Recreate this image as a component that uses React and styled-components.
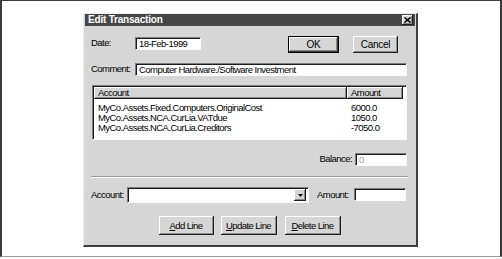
import React from "react";
import styled, { createGlobalStyle } from "styled-components";

const Global = createGlobalStyle`
  html, body { margin: 0; padding: 0; background: #fff; }
  body { font-family: "Liberation Sans", Arial, sans-serif; }
  * { box-sizing: border-box; }
`;

const Frame = styled.div`
  width: 502px;
  height: 257px;
  border-top: 1px solid #3a3a3a;
  border-left: 2px solid #3a3a3a;
  border-right: 2px solid #3a3a3a;
  border-bottom: 1px solid #9a9a9a;
  display: flex;
  justify-content: flex-start;
  align-items: flex-start;
  padding: 12px 0 0 81px;
  background: #fff;
`;

const Dialog = styled.div`
  width: 335px;
  height: 234px;
  background: #d6d6d6;
  border-top: 1px solid #ececec;
  border-left: 1px solid #ececec;
  border-right: 2px solid #3c3c3c;
  border-bottom: 2px solid #3c3c3c;
  display: flex;
  flex-direction: column;
  font-size: 9.5px;
  letter-spacing: -0.55px;
  color: #000;
`;

const TitleBar = styled.div`
  height: 12px;
  margin: 0 1px 0 1px;
  background: #464646;
  color: #fff;
  display: flex;
  align-items: center;
  justify-content: space-between;
  padding: 0 2px 0 3px;
`;

const TitleText = styled.span`
  font-weight: bold;
  font-size: 10px;
  letter-spacing: -0.2px;
  line-height: 12px;
`;

const CloseBtn = styled.div`
  width: 11px;
  height: 10px;
  background: #d6d6d6;
  box-shadow: inset -1px -1px #1e1e1e, inset 1px 1px #fff, inset -2px -2px #888;
  display: flex;
  align-items: center;
  justify-content: center;
`;

const Body = styled.div`
  padding: 10px 8px 0 7px;
  display: flex;
  flex-direction: column;
`;

const Row = styled.div`
  display: flex;
  align-items: flex-start;
  margin-top: ${(p) => p.$mt || 0}px;
  justify-content: ${(p) => p.$justify || "flex-start"};
`;

const Label = styled.span`
  display: inline-block;
  width: ${(p) => (p.$w ? `${p.$w}px` : "auto")};
  margin-top: ${(p) => p.$mt || 0}px;
  margin-left: ${(p) => p.$ml || 0}px;
  margin-right: ${(p) => p.$mr || 0}px;
  line-height: 12px;
  white-space: nowrap;
`;

const Field = styled.div`
  width: ${(p) => (p.$w ? `${p.$w}px` : "auto")};
  flex: ${(p) => (p.$grow ? 1 : "none")};
  height: ${(p) => p.$h || 13}px;
  margin-top: ${(p) => p.$mt || 0}px;
  margin-right: ${(p) => p.$mr || 0}px;
  background: #fff;
  border-top: 1px solid #7c7c7c;
  border-left: 1px solid #7c7c7c;
  border-right: 1px solid #fafafa;
  border-bottom: 1px solid #fafafa;
  box-shadow: inset 1px 1px #1c1c1c;
  padding: 0 0 0 3px;
  line-height: ${(p) => (p.$h || 13) - 2}px;
  color: ${(p) => (p.$disabled ? "#a0a0a0" : "#000")};
  white-space: nowrap;
  overflow: hidden;
`;

const Button = styled.div`
  width: ${(p) => p.$w}px;
  height: ${(p) => p.$h || 19}px;
  margin-left: ${(p) => p.$ml || 0}px;
  margin-right: ${(p) => p.$mr || 0}px;
  background: #d6d6d6;
  display: flex;
  align-items: center;
  justify-content: center;
  font-size: ${(p) => (p.$big ? 10 : 9.5)}px;
  letter-spacing: ${(p) => (p.$big ? -0.3 : -0.55)}px;
  box-shadow: ${(p) =>
    p.$default
      ? "inset 0 0 0 1px #000, inset -2px -2px #3a3a3a, inset 2px 2px #fff, inset -3px -3px #8a8a8a"
      : "inset -1px -1px #1e1e1e, inset 1px 1px #fff, inset -2px -2px #8a8a8a"};
  padding-bottom: 1px;
`;

const U = styled.span`
  text-decoration: underline;
`;

const List = styled.div`
  height: 55px;
  margin: 9px 1px 0 1px;
  background: #fff;
  border-top: 1px solid #7c7c7c;
  border-left: 1px solid #7c7c7c;
  border-right: 1px solid #fafafa;
  border-bottom: 1px solid #fafafa;
  box-shadow: inset 1px 1px #1c1c1c;
  padding: 1px 0 0 1px;
  display: flex;
  flex-direction: column;
`;

const Grid = styled.div`
  display: grid;
  grid-template-columns: 253px 56px;
`;

const HeaderCell = styled.div`
  height: 12px;
  line-height: 11px;
  padding-left: 4px;
  background: #d6d6d6;
  box-shadow: inset -1px -1px #1e1e1e, inset 1px 1px #fff, inset -2px -2px #8a8a8a;
`;

const Rows = styled(Grid)`
  padding-top: 4px;
`;

const Cell = styled.div`
  height: 10px;
  line-height: 10px;
  padding-left: 4px;
  white-space: nowrap;
`;

const Separator = styled.div`
  height: 2px;
  margin-top: 10px;
  border-top: 1px solid #9a9a9a;
  border-bottom: 1px solid #fff;
`;

const Combo = styled(Field)`
  display: flex;
  justify-content: flex-end;
  align-items: flex-start;
  padding: 1px 2px 0 0;
`;

const DropBtn = styled.div`
  width: 12px;
  height: 12px;
  background: #d6d6d6;
  box-shadow: inset -1px -1px #1e1e1e, inset 1px 1px #fff, inset -2px -2px #8a8a8a;
  display: flex;
  align-items: center;
  justify-content: center;
`;

const rows = [
  ["MyCo.Assets.Fixed.Computers.OriginalCost", "6000.0"],
  ["MyCo.Assets.NCA.CurLia.VATdue", "1050.0"],
  ["MyCo.Assets.NCA.CurLia.Creditors", "-7050.0"],
];

export default function App() {
  return (
    <>
      <Global />
      <Frame>
        <Dialog>
          <TitleBar>
            <TitleText>Edit Transaction</TitleText>
            <CloseBtn>
              <svg width="7" height="6" viewBox="0 0 7 6">
                <path d="M0.5 0.5 L6.5 5.5 M6.5 0.5 L0.5 5.5" stroke="#000" strokeWidth="1.6" />
              </svg>
            </CloseBtn>
          </TitleBar>
          <Body>
            <Row>
              <Label $w={44} $mt={1}>Date:</Label>
              <Field $w={66} $h={13} $mt={1}>18-Feb-1999</Field>
              <Button $w={51} $h={17} $ml={87} $default $big>OK</Button>
              <Button $w={45} $h={17} $ml={14} $big>Cancel</Button>
            </Row>
            <Row $mt={10}>
              <Label $w={44}>Comment:</Label>
              <Field $grow $h={13} $mr={1}>Computer Hardware./Software Investment</Field>
            </Row>
            <List>
              <Grid>
                <HeaderCell>Account</HeaderCell>
                <HeaderCell>Amount</HeaderCell>
              </Grid>
              <Rows>
                {rows.map(([a, v]) => (
                  <React.Fragment key={a}>
                    <Cell>{a}</Cell>
                    <Cell>{v}</Cell>
                  </React.Fragment>
                ))}
              </Rows>
            </List>
            <Row $mt={13} $justify="flex-end">
              <Label $mr={3}>Balance:</Label>
              <Field $w={52} $h={13} $mr={1} $disabled>0</Field>
            </Row>
            <Separator />
            <Row $mt={9}>
              <Label $w={36} $mt={2}>Account:</Label>
              <Combo $w={182} $h={16}>
                <DropBtn>
                  <svg width="5" height="3" viewBox="0 0 5 3">
                    <path d="M0 0 H5 L2.5 3 Z" fill="#000" />
                  </svg>
                </DropBtn>
              </Combo>
              <Label $w={37} $ml={8} $mt={2}>Amount:</Label>
              <Field $w={52} $h={13} $mt={1} />
            </Row>
            <Row $mt={13} $justify="center">
              <Button $w={55}><span><U>A</U>dd Line</span></Button>
              <Button $w={56} $ml={7}><span><U>U</U>pdate Line</span></Button>
              <Button $w={56} $ml={8}><span><U>D</U>elete Line</span></Button>
            </Row>
          </Body>
        </Dialog>
      </Frame>
    </>
  );
}
